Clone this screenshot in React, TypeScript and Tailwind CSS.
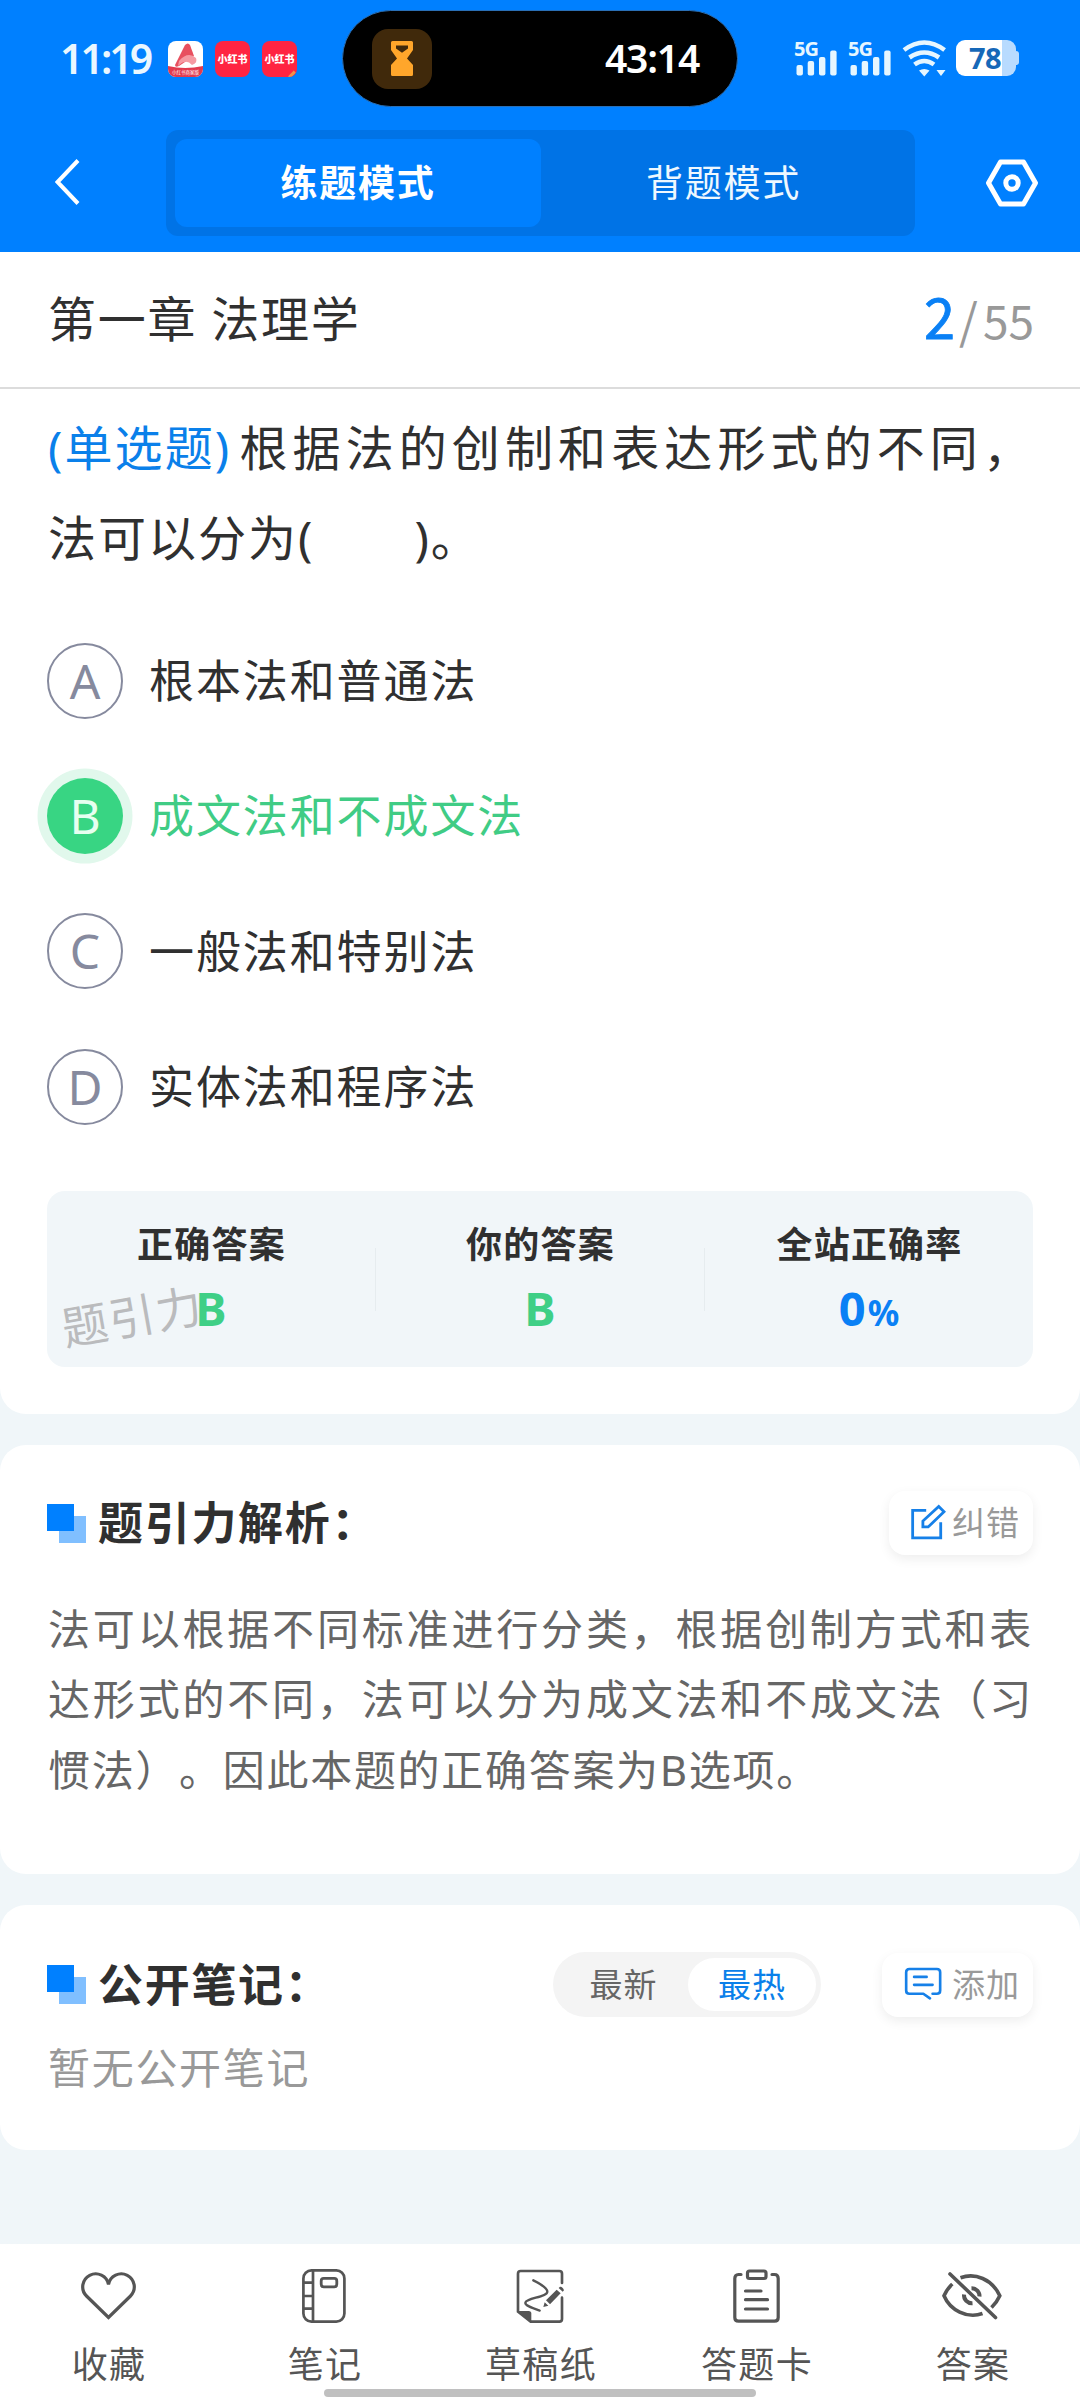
import React from 'react';

const CJK = "font-['Noto_Sans','Noto_Sans_CJK_SC',sans-serif]";

function Signal() {
  return (
    <div className="relative h-[36px] w-[43px]">
      <span className="absolute left-0 top-[1px] text-[20px] leading-[16px] font-bold text-[#e6f6ff] tracking-[-1px]">5G</span>
      <svg className="absolute left-[2px] top-[10px]" width="41" height="26" viewBox="0 0 41 26" fill="#e6f6ff">
        <rect x="0.5" y="15" width="6.4" height="10.5" rx="2" />
        <rect x="11.7" y="11" width="6.4" height="14.5" rx="2" />
        <rect x="23" y="7" width="6.4" height="18.5" rx="2" />
        <rect x="34.2" y="0.5" width="6.4" height="25" rx="2" />
      </svg>
    </div>
  );
}

function StatusBar() {
  return (
    <div className="relative h-[116px] text-white">
      <div className="flex h-[117px] items-center">
        <span className="mb-[2px] ml-[60px] w-[108px] whitespace-nowrap text-[41px] font-semibold leading-[36px] tracking-[-3px] text-[#eaf7ff]">11:19</span>
        <div className="relative h-[36px] w-[35px] shrink-0 overflow-hidden rounded-[8px] bg-white">
          <svg className="absolute inset-0" width="35" height="36" viewBox="0 0 35 36">
            <path d="M7 24 L17 4 Q20 1 22 4 L26 15 L11 25 Q7 27 7 24Z" fill="#e8505f" />
            <path d="M11 20 Q20 10 28 17 Q30 22 24 24 Q18 17 10 25Z" fill="#f59aa2" />
            <path d="M0 25 Q17 29 35 25 V36 H0Z" fill="#e23b4e" />
          </svg>
          <span className="absolute left-[4px] top-[28px] whitespace-nowrap text-[4.5px] leading-[7px] text-white">小红书商家版</span>
        </div>
        <div className="ml-[12px] flex h-[36px] w-[35px] shrink-0 items-center justify-center rounded-[8px] bg-[#ff2442]">
          <span className="whitespace-nowrap text-[10px] font-black leading-[12px]">小红书</span>
        </div>
        <div className="relative ml-[12px] flex h-[36px] w-[35px] shrink-0 items-center justify-center overflow-hidden rounded-[8px] bg-[#ff2442]">
          <span className="whitespace-nowrap text-[10px] font-black leading-[12px]">小红书</span>
          <span className="absolute bottom-[1px] right-[1px] h-[3px] w-[8px] -rotate-45 bg-[#f0914a]" />
        </div>
      </div>
      <div className="absolute left-[342px] top-[10px] flex h-[97px] w-[396px] items-center justify-between rounded-full border border-[#2a6fb5] bg-black pl-[29px] pr-[37px]">
        <div className="flex h-[60px] w-[60px] items-center justify-center rounded-[16px] bg-[#40290b]">
          <svg width="22" height="35" viewBox="0 0 22 35">
            <path fillRule="evenodd" d="M1.5 0H20.5Q22 0 22 1.5V9L16 17.5L22 24V33.500Q22 35 20.500 35H1.500Q0 35 0 33.500V24L6 17.500L0 9V1.500Q0 0 1.500 0ZM5 4.500V7.500L11 11.700L17 7.500V4.500Z" fill="#ffa62b" />
          </svg>
        </div>
        <span className="mb-[2px] mr-px text-[39px] font-semibold leading-[40px] tracking-[-1.200px]">43:14</span>
      </div>
      <div className="absolute left-[794px] top-[40px] flex h-[37px] items-start">
        <Signal />
        <div className="ml-[11px]"><Signal /></div>
        <svg className="ml-[11px]" width="46" height="37" viewBox="0 0 46 37" fill="none" stroke="#e6f6ff" strokeWidth="4.6">
          <path d="M2 10Q22.300 -5 42.600 10" />
          <path d="M7.500 17.500Q22.300 7.500 37 17.500" />
          <path d="M12.500 24.500Q22.300 17.500 32 24.500" />
          <path d="M17 30.500Q22.300 27.500 27.500 30.500L22.300 36.500Z M34.500 30H43.500L39 36Z" fill="#e6f6ff" stroke="none" />
        </svg>
        <div className="relative ml-[8px] flex h-[36px] w-[60px] items-center rounded-[9px] bg-gradient-to-r from-white from-[76%] to-[#b8dbff] to-[76%]">
          <span className="ml-[13px] text-[29px] font-bold leading-[36px] tracking-[-0.5px] text-[#1668b8]">78</span>
          <span className="absolute -right-[3px] top-[11px] h-[14px] w-[4px] rounded-r-[3px] bg-[#b8dbff]" />
        </div>
      </div>
    </div>
  );
}

function NavBar() {
  return (
    <div className="flex h-[136px] items-start text-white">
      <svg className="ml-[55px] mt-[43px]" width="25" height="46" viewBox="0 0 25 46" fill="none" stroke="white" strokeWidth="4">
        <path d="M23 1.500L2.500 23L23 44.500" />
      </svg>
      <div className="ml-[86px] mt-[14px] flex h-[106px] w-[749px] rounded-[12px] bg-[#0073e6] p-[9px]">
        <div className="flex h-[88px] w-[366px] items-center justify-center rounded-[12px] bg-[#0080ff] text-[37px] font-bold tracking-[1.8px]">练题模式</div>
        <div className="flex flex-1 items-center justify-center text-[37px] tracking-[1.800px] text-[#eef8ff]">背题模式</div>
      </div>
      <svg className="ml-[70px] mt-[42px]" width="54" height="50" viewBox="0 0 54 50" fill="none" stroke="white" strokeWidth="5" strokeLinejoin="round">
        <path d="M15.500 4H38.500L50.500 25L38.500 46H15.500L3.500 25Z" />
        <circle cx="27" cy="25" r="6.200" />
      </svg>
    </div>
  );
}

const options = [
  { key: 'A', text: '根本法和普通法' },
  { key: 'B', text: '成文法和不成文法', picked: true },
  { key: 'C', text: '一般法和特别法' },
  { key: 'D', text: '实体法和程序法' },
];

function Option({ k, text, picked }: { k: string; text: string; picked?: boolean }) {
  return (
    <div className="flex h-[135.4px] items-center">
      <div
        className={
          picked
            ? 'flex h-[76px] w-[76px] items-center justify-center rounded-full bg-[#38d583] text-[48px] leading-none text-[#e6fff0] ring-[9.500px] ring-[#e1f8ec]'
            : 'flex h-[76px] w-[76px] items-center justify-center rounded-full border-[2.500px] border-[#868a9e] text-[48px] leading-none text-[#868a9e]'
        }
      >
        {k}
      </div>
      <span className={picked ? 'ml-[26px] text-[45px] tracking-[1.900px] text-[#40cc85]' : 'ml-[26px] text-[45px] tracking-[1.900px] text-[#303030]'}>{text}</span>
    </div>
  );
}

function Stat({ label, children }: { label: string; children: React.ReactNode }) {
  return (
    <div className="relative flex flex-1 flex-col items-center">
      <div className="mt-[27px] pl-px text-[36px] font-bold leading-[54px] tracking-[1.200px] text-[#303030]">{label}</div>
      <div className="mt-[9px] h-[54px] text-[47px] font-bold leading-[54px]">{children}</div>
    </div>
  );
}

function SectionTitle({ children }: { children: React.ReactNode }) {
  return (
    <div className="flex items-center">
      <div className="relative h-[39px] w-[39px]">
        <span className="absolute bottom-0 right-0 h-[27px] w-[27px] bg-[#80bfff]" />
        <span className="absolute left-0 top-0 h-[27px] w-[27px] bg-[#0080ff]" />
      </div>
      <h2 className="ml-[12px] text-[45px] font-bold leading-[64px] tracking-[1.700px] text-[#303030]">{children}</h2>
    </div>
  );
}

const cardButton = 'flex h-[64px] items-center rounded-[16px] bg-white text-[33px] tracking-[1px] text-[#999] shadow-[0_4px_12px_rgba(0,0,0,0.07)]';

const tabs = [
  {
    label: '收藏',
    icon: (
      <svg width="55" height="48" viewBox="0 0 55 48" fill="none" stroke="#555" strokeWidth="3.200">
        <path d="M27.500 12.500A13 13 0 1 0 5.500 24L27.500 45.500L49.500 24A13 13 0 1 0 27.500 12.500Z" />
      </svg>
    ),
  },
  {
    label: '笔记',
    icon: (
      <svg width="44" height="54" viewBox="0 0 44 54" fill="none" stroke="#555" strokeWidth="2.700">
        <rect x="1.400" y="1.400" width="41" height="51.200" rx="8" />
        <path d="M11 1.400V52.600M1.400 13.700H11M1.400 27H11M1.400 39.700H11" />
        <rect x="19.200" y="9.400" width="15.600" height="8.400" rx="2.500" strokeWidth="2.800" />
      </svg>
    ),
  },
  {
    label: '草稿纸',
    icon: (
      <svg width="48" height="54" viewBox="50 28 144 162" fill="none" stroke="#555" strokeWidth="8" strokeLinecap="round">
        <path d="M188 70V42Q188 34 180 34H64Q56 34 56 42V156L94 186H180Q188 186 188 178V114" />
        <path d="M54 154H88Q96 154 96 162V188Z" fill="#555" stroke="none" />
        <path d="M102 62C130 76 144 86 144 96C144 112 78 116 78 130C78 138 96 144 121 153" strokeWidth="7" />
        <path d="M140 122L172 90L184 101L152 134Z M136 128L147 138L132 142Z M178 85L182 81Q190 80 194 92L190 96Z" fill="#555" stroke="none" />
      </svg>
    ),
  },
  {
    label: '答题卡',
    icon: (
      <svg width="47" height="54" viewBox="0 0 47 54" fill="none" stroke="#555" strokeWidth="3.200" strokeLinecap="round">
        <path d="M8 5.500H5.500Q1.800 5.500 1.800 9.500V48.500Q1.800 52.200 5.500 52.200H41.500Q45.200 52.200 45.200 48.500V9.500Q45.200 5.500 41.500 5.500H39" />
        <rect x="14.500" y="2" width="18.500" height="7.500" rx="2" />
        <path d="M12.500 22H28M12.500 30.700H34.500M12.500 40H34.500" />
      </svg>
    ),
  },
  {
    label: '答案',
    icon: (
      <svg width="60" height="50" viewBox="0 0 60 50" fill="none" stroke="#555" strokeWidth="3.600">
        <path d="M18.500 6.800C33 1.500 50 8 57.800 24.700Q55 31 49.500 36.500" />
        <path d="M40.500 42.500C25 48 8 39 2 24.700Q5 18 10.300 13" />
        <path d="M29.500 17.200A7.800 7.800 0 0 1 37.500 25.500M22 23.500A8 8 0 0 0 30.500 32.200" strokeWidth="4" />
        <path d="M8 3L53.500 46.500" strokeLinecap="round" />
      </svg>
    ),
  },
];

export default function App() {
  return (
    <div className={`relative flex h-[2400px] w-[1080px] flex-col overflow-hidden bg-[#f0f6f9] ${CJK}`}>
      <header className="h-[252px] shrink-0 bg-[#0080ff]">
        <StatusBar />
        <NavBar />
      </header>

      <section className="h-[1162px] shrink-0 rounded-b-[26px] bg-white">
        <div className="flex h-[137px] items-center justify-between border-b-2 border-[#dcdcdc] pb-[2px] pl-[48px] pr-[46px]">
          <h1 className="text-[48px] tracking-[1.700px] text-[#303030]">第一章 法理学</h1>
          <div className="mb-[3px] flex items-baseline font-['Noto_Sans_CJK_SC',sans-serif] text-[#999]">
            <span className="text-[56px] leading-[60px] text-[#0a80f5] [-webkit-text-stroke:0.8px_#0a80f5]">2</span>
            <span className="ml-[4px] text-[48px] leading-[60px]">/</span>
            <span className="ml-[5px] text-[46px] leading-[60px]">55</span>
          </div>
        </div>
        <p className="mx-[47px] mt-[14px] w-[986px] pl-px text-justify text-[48px] leading-[90px] tracking-[2px] text-[#303030] [text-spacing-trim:space-all]">
          <span className="mr-[5px] inline-block tracking-[2.100px] text-[#0a80ea]">(单选题)</span>根据法的创制和表达形式的不同，法可以分为(　　)。
        </p>
        <div className="ml-[47px] mt-[30px]">
          {options.map((o) => (
            <Option key={o.key} k={o.key} text={o.text} picked={o.picked} />
          ))}
        </div>
        <div className="relative mx-[47px] mt-[36px] flex h-[176px] rounded-[18px] bg-[#f1f6f9]">
          <span className="absolute left-[14px] top-[92px] -rotate-[10deg] whitespace-nowrap text-[46px] leading-[66px] tracking-[1.500px] text-[#babbbd]">题引力</span>
          <Stat label="正确答案"><span className="text-[#3fcf86]">B</span></Stat>
          <div className="mt-[57px] h-[63px] w-px bg-[#e6ecef]" />
          <Stat label="你的答案"><span className="text-[#3fcf86]">B</span></Stat>
          <div className="mt-[57px] h-[63px] w-px bg-[#e6ecef]" />
          <Stat label="全站正确率"><span className="text-[#0a80f5]">0<span className="ml-[2px] text-[35px]">%</span></span></Stat>
        </div>
      </section>

      <section className="mt-[31px] h-[429px] shrink-0 rounded-[26px] bg-white px-[47px] pt-[46px]">
        <div className="flex items-center justify-between">
          <SectionTitle>题引力解析：</SectionTitle>
          <button className={`${cardButton} w-[144px] pl-[22px]`}>
            <svg className="mb-[3px] mr-[6px]" width="35" height="36" viewBox="120 98 106 108" fill="none" stroke="#1680e8" strokeWidth="8.500">
              <path d="M166 117H125V200H210V153" />
              <path d="M156 167V149L204 105L220 121L172 167Z" />
            </svg>
            纠错
          </button>
        </div>
        <p className="mt-[39px] pl-px text-justify text-[42px] leading-[70.300px] tracking-[1.700px] text-[#666] [text-spacing-trim:space-all]">
          法可以根据不同标准进行分类，根据创制方式和表达形式的不同，法可以分为成文法和不成文法（习惯法）。因此本题的正确答案为B选项。
        </p>
      </section>

      <section className="mt-[31px] h-[245px] shrink-0 rounded-[26px] bg-white px-[47px] pt-[47px]">
        <div className="flex items-center">
          <SectionTitle>公开笔记：</SectionTitle>
          <div className="ml-auto mr-[61px] flex h-[65px] w-[268px] items-center rounded-full bg-[#f4f4f4] pl-[6px] pr-[5px] text-[33px] tracking-[1px]">
            <div className="flex-1 text-center text-[#666]">最新</div>
            <div className="flex h-[53px] w-[128px] items-center justify-center rounded-full bg-white text-[#0a80ea]">最热</div>
          </div>
          <button className={`${cardButton} w-[151px] pl-[22px]`}>
            <svg className="mb-[2px] mr-[10px]" width="38" height="33" viewBox="132 110 114 100" fill="none" stroke="#1680e8" strokeWidth="8" strokeLinecap="round" strokeLinejoin="round">
              <path d="M218 191H231Q241 191 241 181V126Q241 116 231 116H148Q138 116 138 126V181Q138 191 148 191H190L210 205" />
              <path d="M162 140H200M162 164H218" />
            </svg>
            添加
          </button>
        </div>
        <p className="mt-[19px] pl-px text-[42px] leading-[64px] tracking-[1.700px] text-[#999]">暂无公开笔记</p>
      </section>

      <nav className="mt-auto flex h-[156px] shrink-0 bg-white">
        {tabs.map((t) => (
          <div key={t.label} className="flex flex-1 flex-col items-center">
            <div className="mt-[25px] flex h-[54px] items-center">{t.icon}</div>
            <span className="mt-[17px] pl-[2px] text-[36px] leading-[50px] tracking-[1.300px] text-[#555]">{t.label}</span>
          </div>
        ))}
      </nav>
      <div className="absolute bottom-[3px] left-[324px] h-[8px] w-[432px] rounded-full bg-[#c0c0c0]" />
    </div>
  );
}
